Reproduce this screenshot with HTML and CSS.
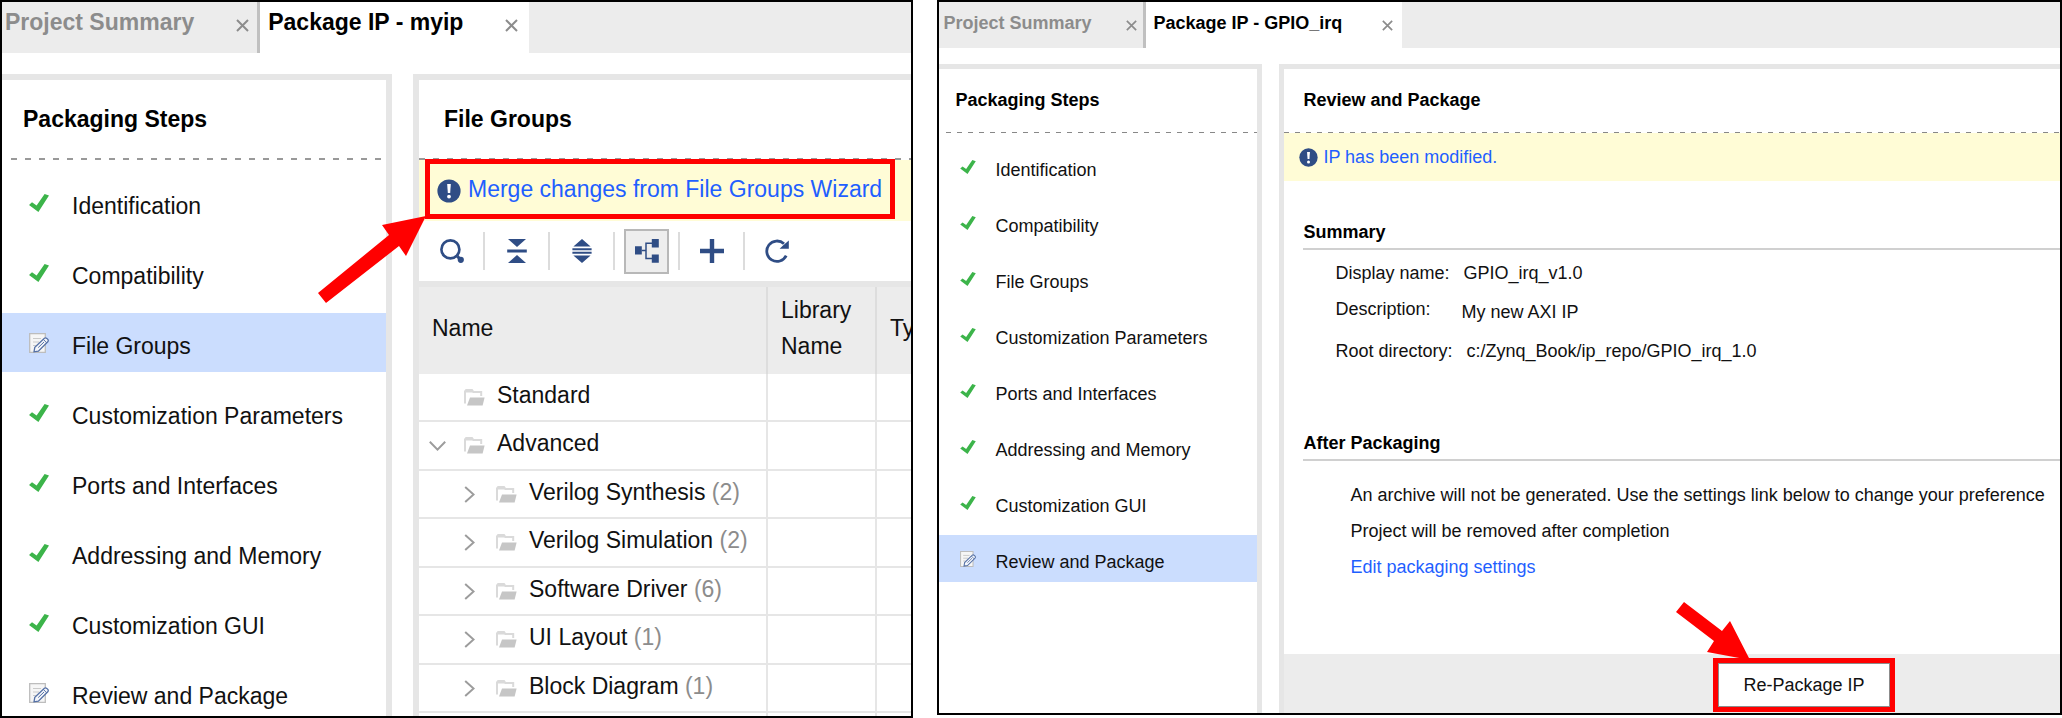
FILE: index.html
```html
<!DOCTYPE html>
<html lang="en">
<head>
<meta charset="utf-8">
<title>Package IP</title>
<link rel="stylesheet" href="styles.css">
</head>
<body>
<svg class="sprite" aria-hidden="true">
  <symbol id="i-check" viewBox="0 0 20 18"><path d="M0 11 3 8.2 7.6 11.6 15.6 0 20 1.6 9.4 18Z" fill="#3cb44a"/></symbol>
  <symbol id="i-edit" viewBox="0 0 20 20">
    <path d="M.7.7H16.3V19.3H.7Z" fill="#f6f6f6" stroke="#bdbdbd" stroke-width="1.3"/>
    <path d="M4 5.5H12M4 9H10M4 12.5H7" stroke="#c9c9c9" stroke-width="1.2"/>
    <path d="M5 18.8 5.8 14.4 15.4 5.2Q16.6 4.4 17.8 5.4L18.8 6.4Q19.8 7.6 18.8 8.8L9.4 18.2Z" fill="#f4f6fa" stroke="#5470a6" stroke-width="1.3"/>
    <path d="M9.2 14.6 15 9M14.4 6.4 17.6 9.8" fill="none" stroke="#5470a6"/>
  </symbol>
  <symbol id="i-info" viewBox="0 0 24 24"><circle cx="12" cy="12" r="11.6" fill="#2f4d85"/><path d="M10.2 5H13.8L13.2 14H10.8Z" fill="#fff"/><circle cx="12" cy="17.6" r="1.9" fill="#fff"/></symbol>
  <symbol id="i-close" viewBox="0 0 13 13"><path d="M1 1 12 12M12 1 1 12" stroke="#8c8c8c" stroke-width="2"/></symbol>
  <symbol id="i-search" viewBox="0 0 24 24"><circle cx="10.4" cy="10.4" r="9" fill="none" stroke="#2f4d85" stroke-width="2.6"/><path d="M17.4 17.4 21 21" stroke="#2f4d85" stroke-width="3"/><circle cx="20.8" cy="20.8" r="3.1" fill="#2f4d85"/></symbol>
  <symbol id="i-collapse" viewBox="0 0 24 24"><path d="M3 0H21L12 8ZM2.2 10.4H21.8V13.6H2.2ZM12 16 21 24H3Z" fill="#2f4d85"/></symbol>
  <symbol id="i-expand" viewBox="0 0 24 24"><path d="M12 0 20.6 7.6H3.4ZM2.4 9.2H21.6V11.2H2.4ZM2.4 12.8H21.6V14.8H2.4ZM3.4 16.4H20.6L12 24Z" fill="#2f4d85"/></symbol>
  <symbol id="i-tree" viewBox="0 0 24 24"><path d="M0 7.2H6.8V15.6H0ZM16.8 0H23.8V8.4H16.8ZM16.8 15.4H23.8V23.8H16.8Z" fill="#2f4d85"/><path d="M6.8 11.4H11M17 4.2H11V19.6H17" fill="none" stroke="#2f4d85" stroke-width="1.5"/></symbol>
  <symbol id="i-plus" viewBox="0 0 24 24"><path d="M9.8 0H14.2V9.8H24V14.2H14.2V24H9.8V14.2H0V9.8H9.8Z" fill="#2f4d85"/></symbol>
  <symbol id="i-refresh" viewBox="0 0 24 24"><path d="M21.2 16.6A10.2 10.2 0 1 1 19 4.8" fill="none" stroke="#2f4d85" stroke-width="2.8"/><path d="M23.8 1.4V9.8H14.6L18 6.6 20.6 4.2Z" fill="#2f4d85"/></symbol>
  <symbol id="i-folder" viewBox="0 0 21 17"><path d="M1 14.5V2.4L2.2 1H8L9.4 3H17.2V7" fill="none" stroke="#dadada" stroke-width="2"/><path d="M1 1H8.4L9.6 3.6H1Z" fill="#dadada"/><path d="M6 8.6H20.6L18.6 16.6H3Z" fill="#c6c6c6"/></symbol>
  <symbol id="i-right" viewBox="0 0 11 17"><path d="M1.2 1 9.6 8.5 1.2 16" fill="none" stroke="#9c9c9c" stroke-width="2"/></symbol>
  <symbol id="i-down" viewBox="0 0 17 10"><path d="M.8.8 8.5 8.6 16.2.8" fill="none" stroke="#9c9c9c" stroke-width="2"/></symbol>
</svg>

<main class="page">
  <section class="window window-large">
    <div class="tabs">
      <div class="tab"><button class="tab-name" type="button">Project Summary</button><button class="close" type="button" aria-label="Close Project Summary"><svg><use href="#i-close"/></svg></button></div>
      <div class="tab active"><button class="tab-name" type="button">Package IP - myip</button><button class="close" type="button" aria-label="Close Package IP - myip"><svg><use href="#i-close"/></svg></button></div>
    </div>
    <div class="panels">
      <nav class="panel steps">
        <h2 class="title">Packaging Steps</h2>
        <ul class="step-list">
          <li><a class="step" href="#"><svg class="check"><use href="#i-check"/></svg><span>Identification</span></a></li>
          <li><a class="step" href="#"><svg class="check"><use href="#i-check"/></svg><span>Compatibility</span></a></li>
          <li><a class="step current" href="#"><svg><use href="#i-edit"/></svg><span>File Groups</span></a></li>
          <li><a class="step" href="#"><svg class="check"><use href="#i-check"/></svg><span>Customization Parameters</span></a></li>
          <li><a class="step" href="#"><svg class="check"><use href="#i-check"/></svg><span>Ports and Interfaces</span></a></li>
          <li><a class="step" href="#"><svg class="check"><use href="#i-check"/></svg><span>Addressing and Memory</span></a></li>
          <li><a class="step" href="#"><svg class="check"><use href="#i-check"/></svg><span>Customization GUI</span></a></li>
          <li><a class="step" href="#"><svg><use href="#i-edit"/></svg><span>Review and Package</span></a></li>
        </ul>
      </nav>
      <div class="panel content">
        <h2 class="title">File Groups</h2>
        <div class="notice">
          <svg><use href="#i-info"/></svg><a href="#">Merge changes from File Groups Wizard</a>
          <span class="callout"></span>
        </div>
        <div class="toolbar">
          <button type="button" aria-label="Search"><svg><use href="#i-search"/></svg></button>
          <button type="button" aria-label="Collapse all"><svg><use href="#i-collapse"/></svg></button>
          <button type="button" aria-label="Expand all"><svg><use href="#i-expand"/></svg></button>
          <button type="button" class="pressed" aria-label="Group by type" aria-pressed="true"><svg><use href="#i-tree"/></svg></button>
          <button type="button" aria-label="Add"><svg><use href="#i-plus"/></svg></button>
          <button type="button" aria-label="Refresh"><svg><use href="#i-refresh"/></svg></button>
        </div>
        <table class="files">
          <colgroup><col class="col-name"><col class="col-library"><col class="col-type"></colgroup>
          <thead><tr><th>Name</th><th>Library<br>Name</th><th>Type</th></tr></thead>
          <tbody>
            <tr><td><div class="node"><i class="twisty"></i><svg class="folder"><use href="#i-folder"/></svg><span>Standard</span></div></td><td></td><td></td></tr>
            <tr><td><div class="node"><i class="twisty"><svg class="down"><use href="#i-down"/></svg></i><svg class="folder"><use href="#i-folder"/></svg><span>Advanced</span></div></td><td></td><td></td></tr>
            <tr><td><div class="node child"><i class="twisty"><svg class="right"><use href="#i-right"/></svg></i><svg class="folder"><use href="#i-folder"/></svg><span>Verilog Synthesis <em>(2)</em></span></div></td><td></td><td></td></tr>
            <tr><td><div class="node child"><i class="twisty"><svg class="right"><use href="#i-right"/></svg></i><svg class="folder"><use href="#i-folder"/></svg><span>Verilog Simulation <em>(2)</em></span></div></td><td></td><td></td></tr>
            <tr><td><div class="node child"><i class="twisty"><svg class="right"><use href="#i-right"/></svg></i><svg class="folder"><use href="#i-folder"/></svg><span>Software Driver <em>(6)</em></span></div></td><td></td><td></td></tr>
            <tr><td><div class="node child"><i class="twisty"><svg class="right"><use href="#i-right"/></svg></i><svg class="folder"><use href="#i-folder"/></svg><span>UI Layout <em>(1)</em></span></div></td><td></td><td></td></tr>
            <tr><td><div class="node child"><i class="twisty"><svg class="right"><use href="#i-right"/></svg></i><svg class="folder"><use href="#i-folder"/></svg><span>Block Diagram <em>(1)</em></span></div></td><td></td><td></td></tr>
            <tr><td></td><td></td><td></td></tr>
          </tbody>
        </table>
      </div>
    </div>
    <svg class="arrow arrow-merge" viewBox="0 0 108 88"><path d="M0 77 71 19 64 9 108 0 88 40 81 30 8 87Z" fill="#f00"/></svg>
  </section>

  <section class="window window-compact">
    <div class="tabs">
      <div class="tab"><button class="tab-name" type="button">Project Summary</button><button class="close" type="button" aria-label="Close Project Summary"><svg><use href="#i-close"/></svg></button></div>
      <div class="tab active"><button class="tab-name" type="button">Package IP - GPIO_irq</button><button class="close" type="button" aria-label="Close Package IP - GPIO_irq"><svg><use href="#i-close"/></svg></button></div>
    </div>
    <div class="panels">
      <nav class="panel steps">
        <h2 class="title">Packaging Steps</h2>
        <ul class="step-list">
          <li><a class="step" href="#"><svg class="check"><use href="#i-check"/></svg><span>Identification</span></a></li>
          <li><a class="step" href="#"><svg class="check"><use href="#i-check"/></svg><span>Compatibility</span></a></li>
          <li><a class="step" href="#"><svg class="check"><use href="#i-check"/></svg><span>File Groups</span></a></li>
          <li><a class="step" href="#"><svg class="check"><use href="#i-check"/></svg><span>Customization Parameters</span></a></li>
          <li><a class="step" href="#"><svg class="check"><use href="#i-check"/></svg><span>Ports and Interfaces</span></a></li>
          <li><a class="step" href="#"><svg class="check"><use href="#i-check"/></svg><span>Addressing and Memory</span></a></li>
          <li><a class="step" href="#"><svg class="check"><use href="#i-check"/></svg><span>Customization GUI</span></a></li>
          <li><a class="step current" href="#"><svg><use href="#i-edit"/></svg><span>Review and Package</span></a></li>
        </ul>
      </nav>
      <div class="panel content">
        <h2 class="title">Review and Package</h2>
        <div class="notice"><svg><use href="#i-info"/></svg><a href="#">IP has been modified.</a></div>
        <div class="review">
          <h3>Summary</h3>
          <dl class="summary">
            <div><dt>Display name:</dt><dd>GPIO_irq_v1.0</dd></div>
            <div class="described"><dt>Description:</dt><dd>My new AXI IP</dd></div>
            <div><dt>Root directory:</dt><dd>c:/Zynq_Book/ip_repo/GPIO_irq_1.0</dd></div>
          </dl>
          <h3>After Packaging</h3>
          <div class="after">
            <p>An archive will not be generated. Use the settings link below to change your preference</p>
            <p>Project will be removed after completion</p>
            <p><a href="#">Edit packaging settings</a></p>
          </div>
        </div>
        <footer class="actions">
          <div class="action">
            <button type="button">Re-Package IP</button>
            <svg class="arrow arrow-repackage" viewBox="0 0 74 58"><path d="M8 0 46 29 54 19 74 58 31 50 38 39 0 10Z" fill="#f00"/></svg>
          </div>
        </footer>
      </div>
    </div>
  </section>
</main>
</body>
</html>
```
FILE: styles.css
```css
* { box-sizing: border-box; }
body { margin: 0; background: #fff; color: #111; font-family: "Liberation Sans", Arial, sans-serif; }
h2, h3, p, ul, dl, dd { margin: 0; padding: 0; }
ul { list-style: none; }
a { color: #1f5fff; text-decoration: none; }
button { margin: 0; padding: 0; border: 0; background: none; color: inherit; font: inherit; }
svg { display: block; flex: none; }
.sprite { position: absolute; width: 0; height: 0; }

.page { display: flex; gap: 24px; height: 100vh; }
.window { position: relative; display: flex; flex-direction: column; min-width: 0; border: 2px solid #000; overflow: hidden; }

.window-large {
  flex: 913 1 0;
  font-size: 23px;
  --frame: 6px;
  --icon: 20px;
  --row: 59px;
  --row-gap: 11px;
}
.window-compact {
  flex: 1125 1 0;
  margin-bottom: 3px;
  font-size: 18px;
  --frame: 5px;
  --icon: 16px;
  --row: 47px;
  --row-gap: 9px;
}

/* Tabs */
.tabs { display: flex; flex: none; background: #ececec; }
.tab { display: flex; align-items: center; color: #8c8c8c; font-weight: bold; white-space: nowrap; }
.tab.active { background: #fff; color: #000; }
.tab:first-child { border-right: 3px solid #c0c0c0; }
.window-large .tabs { height: 51px; }
.window-large .tab { gap: 42px; padding: 0 11px 10px 8px; }
.window-large .tab:first-child { padding: 0 8px 10px 3px; }
.window-large .close { padding-top: 6px; }
.window-large .close svg { width: 13px; height: 13px; }
.window-compact .tabs { height: 46px; }
.window-compact .tab { gap: 40px; padding: 0 9px 3px 7px; }
.window-compact .tab:first-child { gap: 35px; padding: 0 6px 3px 4px; }
.window-compact .close { padding-top: 4px; }
.window-compact .close svg { width: 11px; height: 11px; }

/* Panels */
.panels { display: grid; flex: 1; min-height: 0; }
.window-large .panels { grid-template-columns: 390px minmax(0, 1fr); gap: 21px; padding-top: 21px; }
.window-compact .panels { grid-template-columns: 323px minmax(0, 1fr); gap: 17px; padding-top: 16px; }
.panel { display: flex; flex-direction: column; min-width: 0; min-height: 0; border: 0 solid #e6e6e6; border-top-width: var(--frame); }
.steps { border-right-width: var(--frame); }
.content { border-left-width: var(--frame); }

.title {
  display: flex;
  flex: none;
  align-items: center;
  color: #000;
  font-size: inherit;
  background: repeating-linear-gradient(90deg, #999 0 6px, transparent 6px 14px) 0 100% / 100% 2px no-repeat;
}
.window-large .title { height: 80px; padding: 0 25px 2px; }
.window-large .steps .title { padding-left: 21px; background-position: 9px 100%; }
.window-compact .title {
  height: 64px;
  padding: 0 19px 1px;
  background-image: repeating-linear-gradient(90deg, #888 0 5px, transparent 5px 11px);
  background-size: 100% 1px;
}
.window-compact .steps .title { padding-left: 16px; background-position: 7px 100%; }

/* Packaging steps */
.step-list { display: flex; flex-direction: column; gap: var(--row-gap); }
.window-large .step-list { padding-top: 13px; }
.window-compact .step-list { padding-top: 10px; }
.step { display: flex; align-items: center; height: var(--row); color: #111; white-space: nowrap; }
.step.current { background: #cbddfe; }
.step svg { width: var(--icon); height: var(--icon); }
.step .check { padding: 1px 0; }
.step span { padding-top: 7px; }
.window-large .step { gap: 23px; padding-left: 27px; }
.window-compact .step { gap: 19px; padding-left: 21px; }

/* Notice bar */
.notice { position: relative; display: flex; flex: none; align-items: center; background: #fffcd6; white-space: nowrap; }
.window-large .notice { height: 61px; gap: 7px; padding-left: 18px; }
.window-large .notice a { padding-bottom: 2px; }
.window-large .notice svg { width: 24px; height: 24px; }
.window-compact .notice { height: 48px; gap: 5px; padding-left: 15px; }
.window-compact .notice svg { width: 19px; height: 19px; }
.callout { position: absolute; inset: -1px 16px 2px 6px; border: 5px solid #f00; }

/* Toolbar */
.toolbar { display: flex; flex: none; align-items: center; height: 66px; padding-left: 10px; border-bottom: 6px solid #e6e6e6; }
.toolbar button { display: grid; place-items: center; width: 45px; height: 45px; }
.toolbar button + button { margin-left: 20px; position: relative; }
.toolbar button + button::before { content: ""; position: absolute; right: calc(100% + 9px); width: 2px; height: 38px; background: #dcdcdc; }
.toolbar svg { width: 24px; height: 24px; }
.toolbar .pressed { background: #eee; box-shadow: inset 0 0 0 2px #b8b8b8; }

/* File table */
.files { width: 640px; flex: none; border-collapse: separate; border-spacing: 0; table-layout: fixed; }
.col-name { width: 349px; }
.col-library { width: 109px; }
.files th { height: 87px; padding: 0 13px 6px; background: #ececec; font-weight: normal; line-height: 36px; text-align: left; border-right: 2px solid #ddd; }
.files td { height: 48px; padding: 0; border: 0 solid #e6e6e6; border-width: 0 2px 2px 0; }
.files tr:nth-child(even) td { height: 49px; }
.node { display: flex; align-items: center; padding-left: 10px; white-space: nowrap; }
.node.child { padding-left: 42px; }
.node span { padding: 0 0 4px 12px; }
.node em { color: #8c8c8c; font-style: normal; }
.twisty { display: flex; width: 35px; }
.right { width: 11px; height: 17px; margin-left: 3px; }
.down { width: 17px; height: 10px; }
.folder { width: 21px; height: 17px; }

/* Review and package */
.review { flex: 1; min-height: 0; padding: 38px 0 0 19px; white-space: nowrap; }
.review h3 { padding-bottom: 3px; border-bottom: 2px solid #d0d0d0; color: #000; font-size: inherit; line-height: 26px; }
.summary { padding: 5px 0 61px 32px; }
.summary div { display: flex; height: 36px; gap: 14px; line-height: 36px; }
.summary .described { height: 42px; gap: 31px; }
.summary .described dd { padding-top: 3px; }
.after { padding: 16px 0 0 47px; line-height: 36px; }

.actions { display: flex; flex: none; justify-content: flex-end; height: 59px; padding: 4px 165px 0 0; background: #ececec; }
.action { position: relative; width: 182px; height: 54px; border: 5px solid #f00; }
.action button { width: 100%; height: 100%; border: 1px solid #8c8c8c; background: #fff; }

/* Pointer arrows */
.arrow { position: absolute; }
.arrow-merge { left: 316px; top: 214px; width: 108px; height: 88px; }
.arrow-repackage { right: 140px; bottom: 47px; width: 74px; height: 58px; }
```
